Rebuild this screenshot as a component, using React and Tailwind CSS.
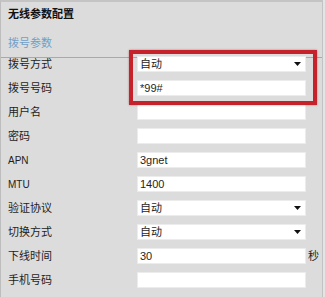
import React from "react";

const rows = [
  { label: "拨号方式", type: "select", value: "自动" },
  { label: "拨号号码", type: "input", value: "*99#" },
  { label: "用户名", type: "input", value: "" },
  { label: "密码", type: "input", value: "" },
  { label: "APN", type: "input", value: "3gnet", latin: true },
  { label: "MTU", type: "input", value: "1400", latin: true },
  { label: "验证协议", type: "select", value: "自动" },
  { label: "切换方式", type: "select", value: "自动" },
  { label: "下线时间", type: "input", value: "30", suffix: "秒" },
  { label: "手机号码", type: "input", value: "" },
];

function Arrow() {
  return (
    <svg width="7" height="4" viewBox="0 0 7 4" className="shrink-0">
      <path d="M0 0 H7 L3.5 4 Z" fill="#111" />
    </svg>
  );
}

export default function App() {
  return (
    <div
      className="relative w-[325px] h-[297px] bg-[#e4e4e4] overflow-hidden flex text-[#1e1e1e]"
      style={{ fontFamily: '"Liberation Sans", "Noto Sans CJK SC", sans-serif' }}
    >
      <div className="w-[323px] shrink-0 h-full bg-[#dcdcdc] border-l border-t-2 border-r border-l-[#bdbdbd] border-t-[#c4c4c4] border-r-[#c2c2c2] flex flex-col">
        <div className="pl-[7px] pt-[4px] text-[11px] leading-[16px] font-bold text-[#111]">
          无线参数配置
        </div>
        <div className="mt-[13px] pl-[7px] pb-[6px] border-b border-[#a9a9a9] text-[11px] leading-[16px] text-[#6f9fc9]">
          拨号参数
        </div>
        <div className="-mt-[6px] flex flex-col">
          {rows.map((r) => (
            <div key={r.label} className="h-[24px] flex items-center pl-[7px]">
              <div
                className={
                  "w-[129px] shrink-0 " +
                  (r.latin ? "text-[10px]" : "text-[11px]")
                }
              >
                {r.label}
              </div>
              <div className="w-[169px] shrink-0 h-[16px] bg-white border border-[#ececec] flex items-center pl-[2px] pr-[4px] text-[11px] leading-none">
                <span className="flex-1">{r.value}</span>
                {r.type === "select" && <Arrow />}
              </div>
              {r.suffix && (
                <span className="ml-[2px] shrink-0 text-[11px] leading-none">{r.suffix}</span>
              )}
            </div>
          ))}
        </div>
      </div>
      <div className="absolute left-[129px] top-[50px] w-[188px] h-[55px] border-[4px] border-[#c6222b] shadow-[0_0_2px_rgba(120,0,0,0.4)]" />
    </div>
  );
}
